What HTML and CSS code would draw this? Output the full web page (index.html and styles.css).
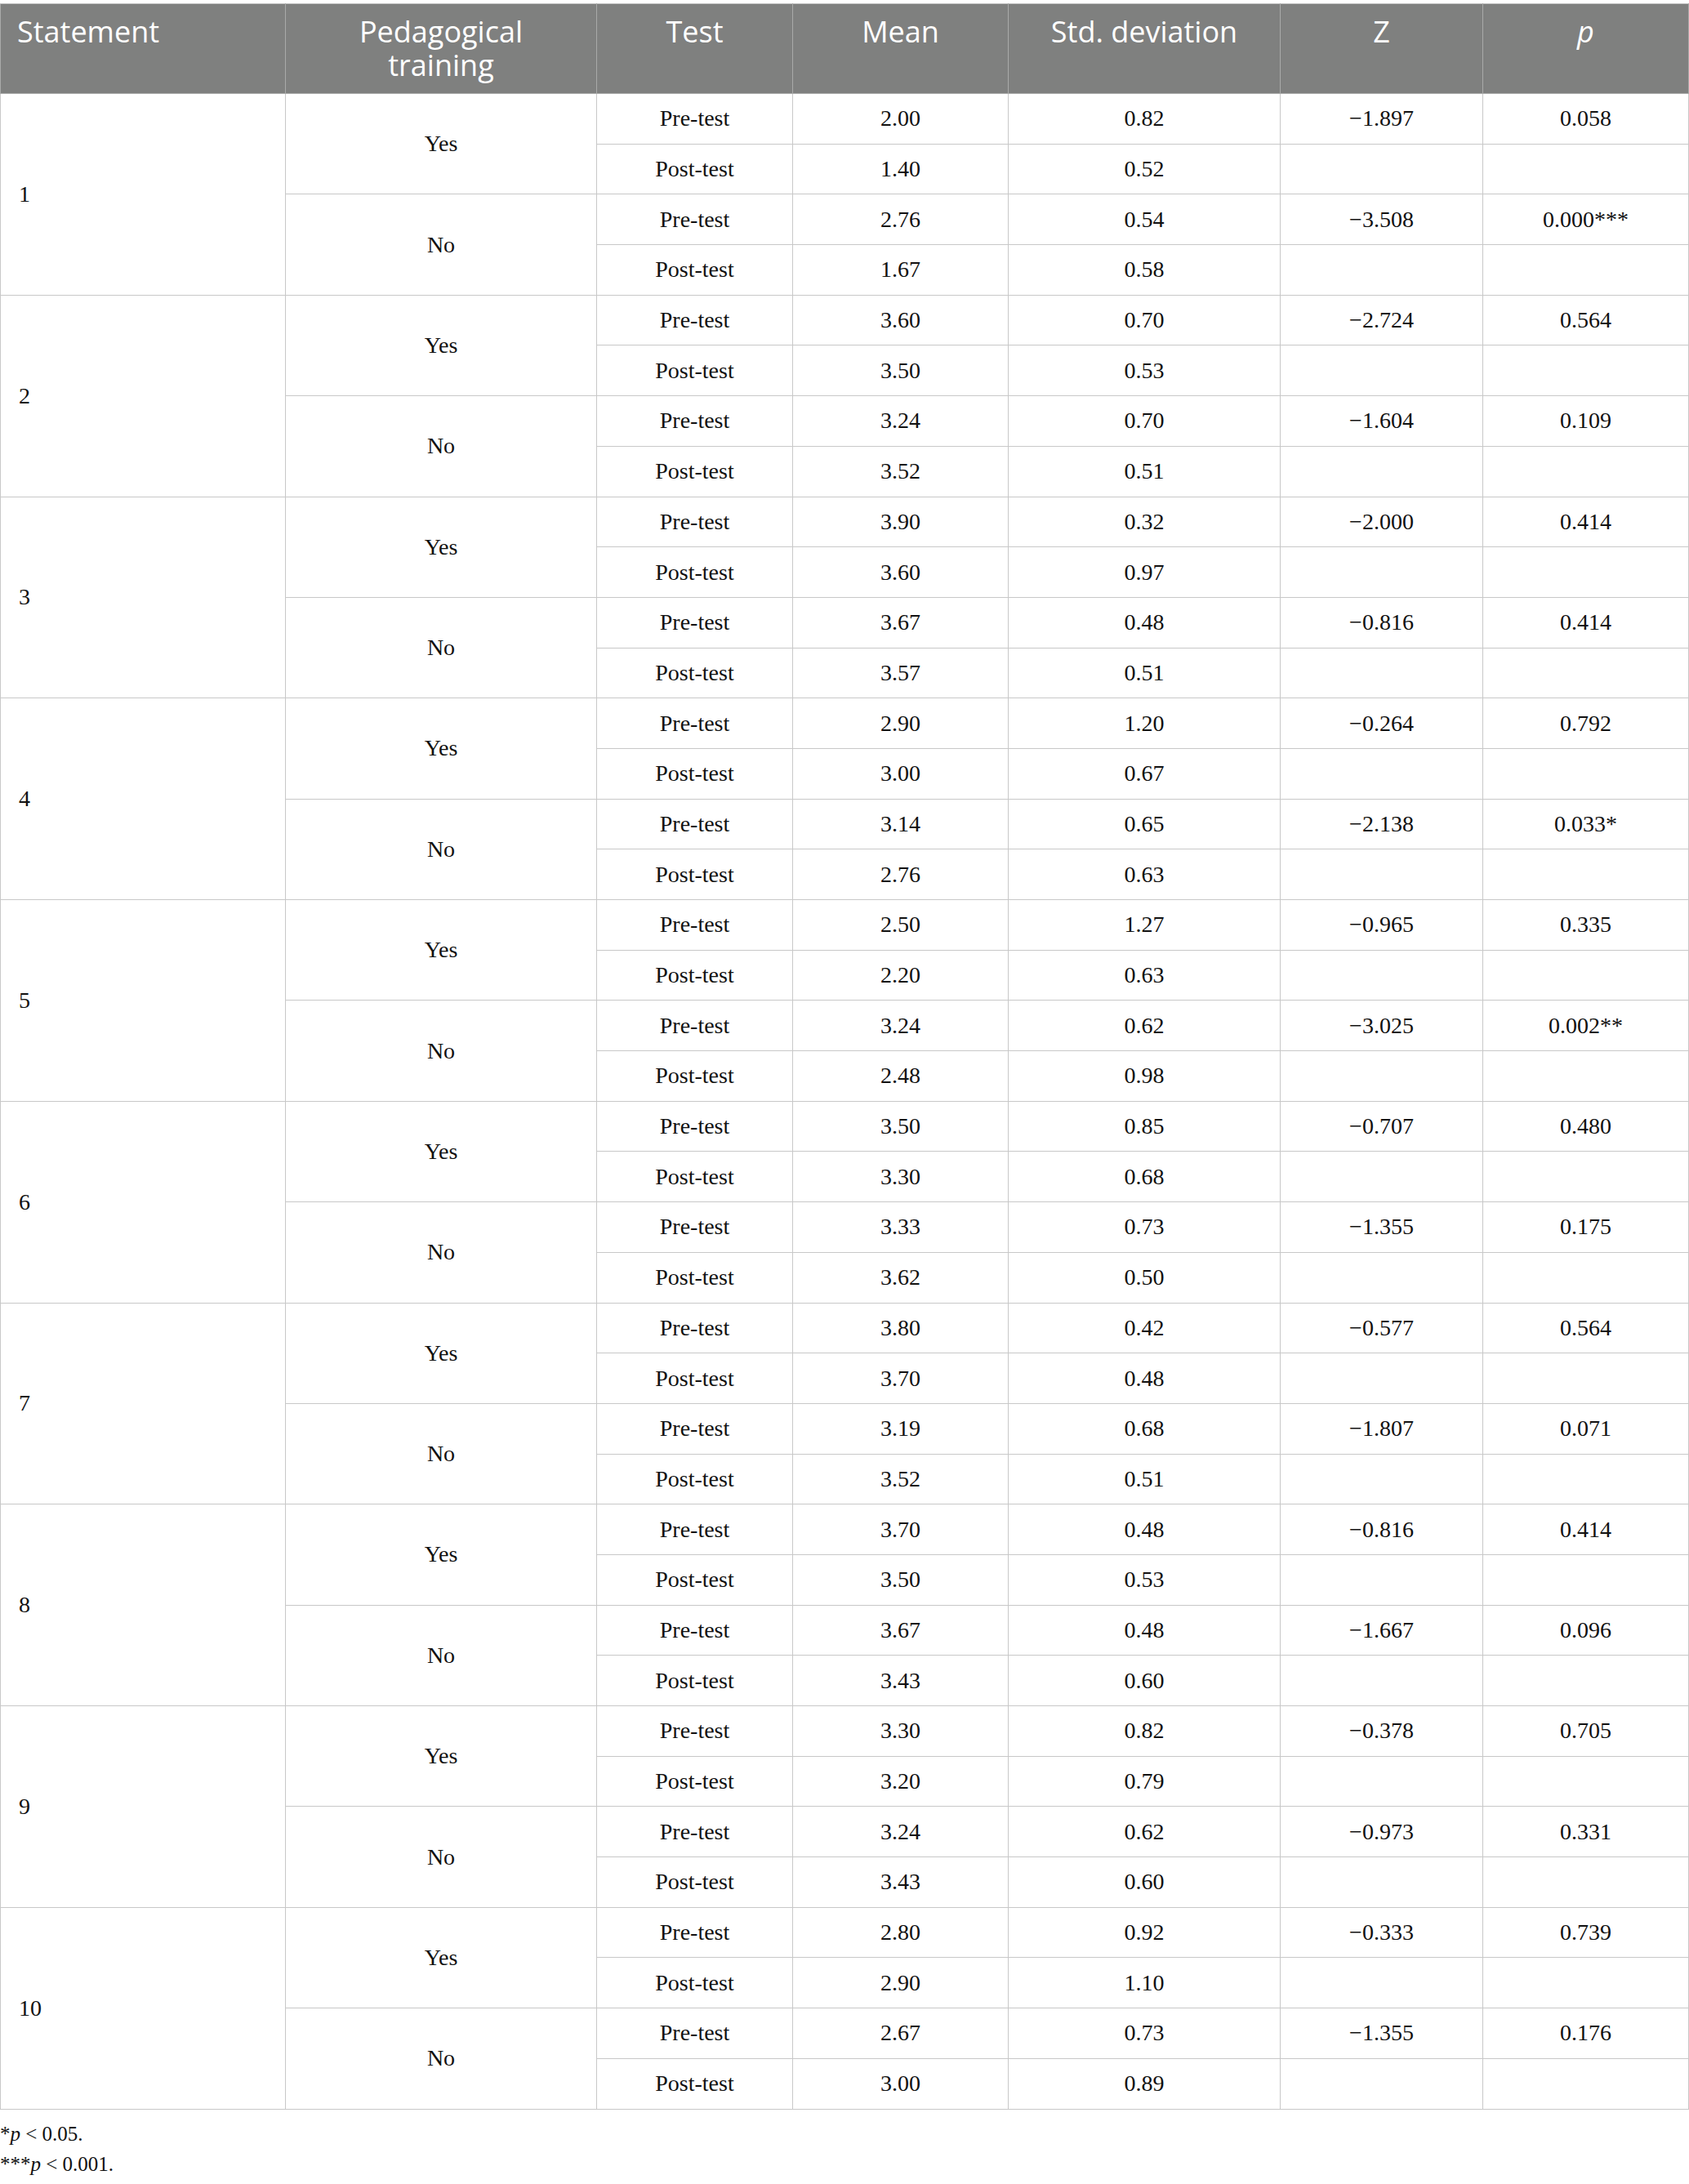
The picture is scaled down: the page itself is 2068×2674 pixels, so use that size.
FILE: index.html
```html
<!DOCTYPE html>
<html lang="en">
<head>
  <meta charset="UTF-8">
  <title>Pre-test and post-test results by pedagogical training</title>
  <link rel="stylesheet" href="styles.css">
</head>
<body>
  <div class="wrap">
    <table class="results">
      <colgroup>
        <col class="c-statement">
        <col class="c-training">
        <col class="c-test">
        <col class="c-mean">
        <col class="c-sd">
        <col class="c-z">
        <col class="c-p">
      </colgroup>
      <thead>
        <tr>
          <th class="left">Statement</th>
          <th>Pedagogical<br>training</th>
          <th>Test</th>
          <th>Mean</th>
          <th>Std. deviation</th>
          <th>Z</th>
          <th><i>p</i></th>
        </tr>
      </thead>
      <tbody>
        <!-- Statement 1 -->
        <tr><td class="stmt" rowspan="4">1</td><td rowspan="2">Yes</td><td>Pre-test</td><td>2.00</td><td>0.82</td><td>&minus;1.897</td><td>0.058</td></tr>
        <tr><td>Post-test</td><td>1.40</td><td>0.52</td><td></td><td></td></tr>
        <tr><td rowspan="2">No</td><td>Pre-test</td><td>2.76</td><td>0.54</td><td>&minus;3.508</td><td>0.000***</td></tr>
        <tr><td>Post-test</td><td>1.67</td><td>0.58</td><td></td><td></td></tr>

        <!-- Statement 2 -->
        <tr><td class="stmt" rowspan="4">2</td><td rowspan="2">Yes</td><td>Pre-test</td><td>3.60</td><td>0.70</td><td>&minus;2.724</td><td>0.564</td></tr>
        <tr><td>Post-test</td><td>3.50</td><td>0.53</td><td></td><td></td></tr>
        <tr><td rowspan="2">No</td><td>Pre-test</td><td>3.24</td><td>0.70</td><td>&minus;1.604</td><td>0.109</td></tr>
        <tr><td>Post-test</td><td>3.52</td><td>0.51</td><td></td><td></td></tr>

        <!-- Statement 3 -->
        <tr><td class="stmt" rowspan="4">3</td><td rowspan="2">Yes</td><td>Pre-test</td><td>3.90</td><td>0.32</td><td>&minus;2.000</td><td>0.414</td></tr>
        <tr><td>Post-test</td><td>3.60</td><td>0.97</td><td></td><td></td></tr>
        <tr><td rowspan="2">No</td><td>Pre-test</td><td>3.67</td><td>0.48</td><td>&minus;0.816</td><td>0.414</td></tr>
        <tr><td>Post-test</td><td>3.57</td><td>0.51</td><td></td><td></td></tr>

        <!-- Statement 4 -->
        <tr><td class="stmt" rowspan="4">4</td><td rowspan="2">Yes</td><td>Pre-test</td><td>2.90</td><td>1.20</td><td>&minus;0.264</td><td>0.792</td></tr>
        <tr><td>Post-test</td><td>3.00</td><td>0.67</td><td></td><td></td></tr>
        <tr><td rowspan="2">No</td><td>Pre-test</td><td>3.14</td><td>0.65</td><td>&minus;2.138</td><td>0.033*</td></tr>
        <tr><td>Post-test</td><td>2.76</td><td>0.63</td><td></td><td></td></tr>

        <!-- Statement 5 -->
        <tr><td class="stmt" rowspan="4">5</td><td rowspan="2">Yes</td><td>Pre-test</td><td>2.50</td><td>1.27</td><td>&minus;0.965</td><td>0.335</td></tr>
        <tr><td>Post-test</td><td>2.20</td><td>0.63</td><td></td><td></td></tr>
        <tr><td rowspan="2">No</td><td>Pre-test</td><td>3.24</td><td>0.62</td><td>&minus;3.025</td><td>0.002**</td></tr>
        <tr><td>Post-test</td><td>2.48</td><td>0.98</td><td></td><td></td></tr>

        <!-- Statement 6 -->
        <tr><td class="stmt" rowspan="4">6</td><td rowspan="2">Yes</td><td>Pre-test</td><td>3.50</td><td>0.85</td><td>&minus;0.707</td><td>0.480</td></tr>
        <tr><td>Post-test</td><td>3.30</td><td>0.68</td><td></td><td></td></tr>
        <tr><td rowspan="2">No</td><td>Pre-test</td><td>3.33</td><td>0.73</td><td>&minus;1.355</td><td>0.175</td></tr>
        <tr><td>Post-test</td><td>3.62</td><td>0.50</td><td></td><td></td></tr>

        <!-- Statement 7 -->
        <tr><td class="stmt" rowspan="4">7</td><td rowspan="2">Yes</td><td>Pre-test</td><td>3.80</td><td>0.42</td><td>&minus;0.577</td><td>0.564</td></tr>
        <tr><td>Post-test</td><td>3.70</td><td>0.48</td><td></td><td></td></tr>
        <tr><td rowspan="2">No</td><td>Pre-test</td><td>3.19</td><td>0.68</td><td>&minus;1.807</td><td>0.071</td></tr>
        <tr><td>Post-test</td><td>3.52</td><td>0.51</td><td></td><td></td></tr>

        <!-- Statement 8 -->
        <tr><td class="stmt" rowspan="4">8</td><td rowspan="2">Yes</td><td>Pre-test</td><td>3.70</td><td>0.48</td><td>&minus;0.816</td><td>0.414</td></tr>
        <tr><td>Post-test</td><td>3.50</td><td>0.53</td><td></td><td></td></tr>
        <tr><td rowspan="2">No</td><td>Pre-test</td><td>3.67</td><td>0.48</td><td>&minus;1.667</td><td>0.096</td></tr>
        <tr><td>Post-test</td><td>3.43</td><td>0.60</td><td></td><td></td></tr>

        <!-- Statement 9 -->
        <tr><td class="stmt" rowspan="4">9</td><td rowspan="2">Yes</td><td>Pre-test</td><td>3.30</td><td>0.82</td><td>&minus;0.378</td><td>0.705</td></tr>
        <tr><td>Post-test</td><td>3.20</td><td>0.79</td><td></td><td></td></tr>
        <tr><td rowspan="2">No</td><td>Pre-test</td><td>3.24</td><td>0.62</td><td>&minus;0.973</td><td>0.331</td></tr>
        <tr><td>Post-test</td><td>3.43</td><td>0.60</td><td></td><td></td></tr>

        <!-- Statement 10 -->
        <tr><td class="stmt" rowspan="4">10</td><td rowspan="2">Yes</td><td>Pre-test</td><td>2.80</td><td>0.92</td><td>&minus;0.333</td><td>0.739</td></tr>
        <tr><td>Post-test</td><td>2.90</td><td>1.10</td><td></td><td></td></tr>
        <tr><td rowspan="2">No</td><td>Pre-test</td><td>2.67</td><td>0.73</td><td>&minus;1.355</td><td>0.176</td></tr>
        <tr><td>Post-test</td><td>3.00</td><td>0.89</td><td></td><td></td></tr>
      </tbody>
    </table>

    <div class="notes">
      <p>*<i>p</i> &lt; 0.05.</p>
      <p>***<i>p</i> &lt; 0.001.</p>
    </div>
  </div>
</body>
</html>
```

FILE: styles.css
```css
body {
  margin: 0;
  background: #fff;
  color: #111;
  font-family: "Liberation Serif", "Times New Roman", serif;
}

.wrap {
  width: 2067px;
  padding-top: 4px;
}

.results {
  width: 2067px;
  border-collapse: collapse;
  table-layout: fixed;
}

.c-statement { width: 349px; }
.c-training  { width: 381px; }
.c-test      { width: 240px; }
.c-mean      { width: 264px; }
.c-sd        { width: 333px; }
.c-z         { width: 248px; }
.c-p         { width: 252px; }

.results thead tr {
  height: 110px;
}

.results th {
  background: #7f807f;
  color: #fff;
  font-family: "Open Sans", "Noto Sans", sans-serif;
  font-weight: 400;
  font-size: 36px;
  line-height: 41px;
  text-align: center;
  vertical-align: top;
  padding: 13px 10px 0;
  border: 1px solid #a9aaa9;
  border-top-color: #c4c4c4;
}

.results th.left {
  text-align: left;
  padding-left: 20px;
}

.results tbody tr {
  height: 61.7px;
}

.results td {
  font-size: 28px;
  line-height: 32px;
  text-align: center;
  vertical-align: middle;
  padding: 0 8px;
  border: 1px solid #c8c8c8;
}

.results td.stmt {
  text-align: left;
  padding-left: 22px;
}

.notes {
  margin-top: 11px;
  font-size: 25px;
  line-height: 37px;
}

.notes p {
  margin: 0;
}
```
